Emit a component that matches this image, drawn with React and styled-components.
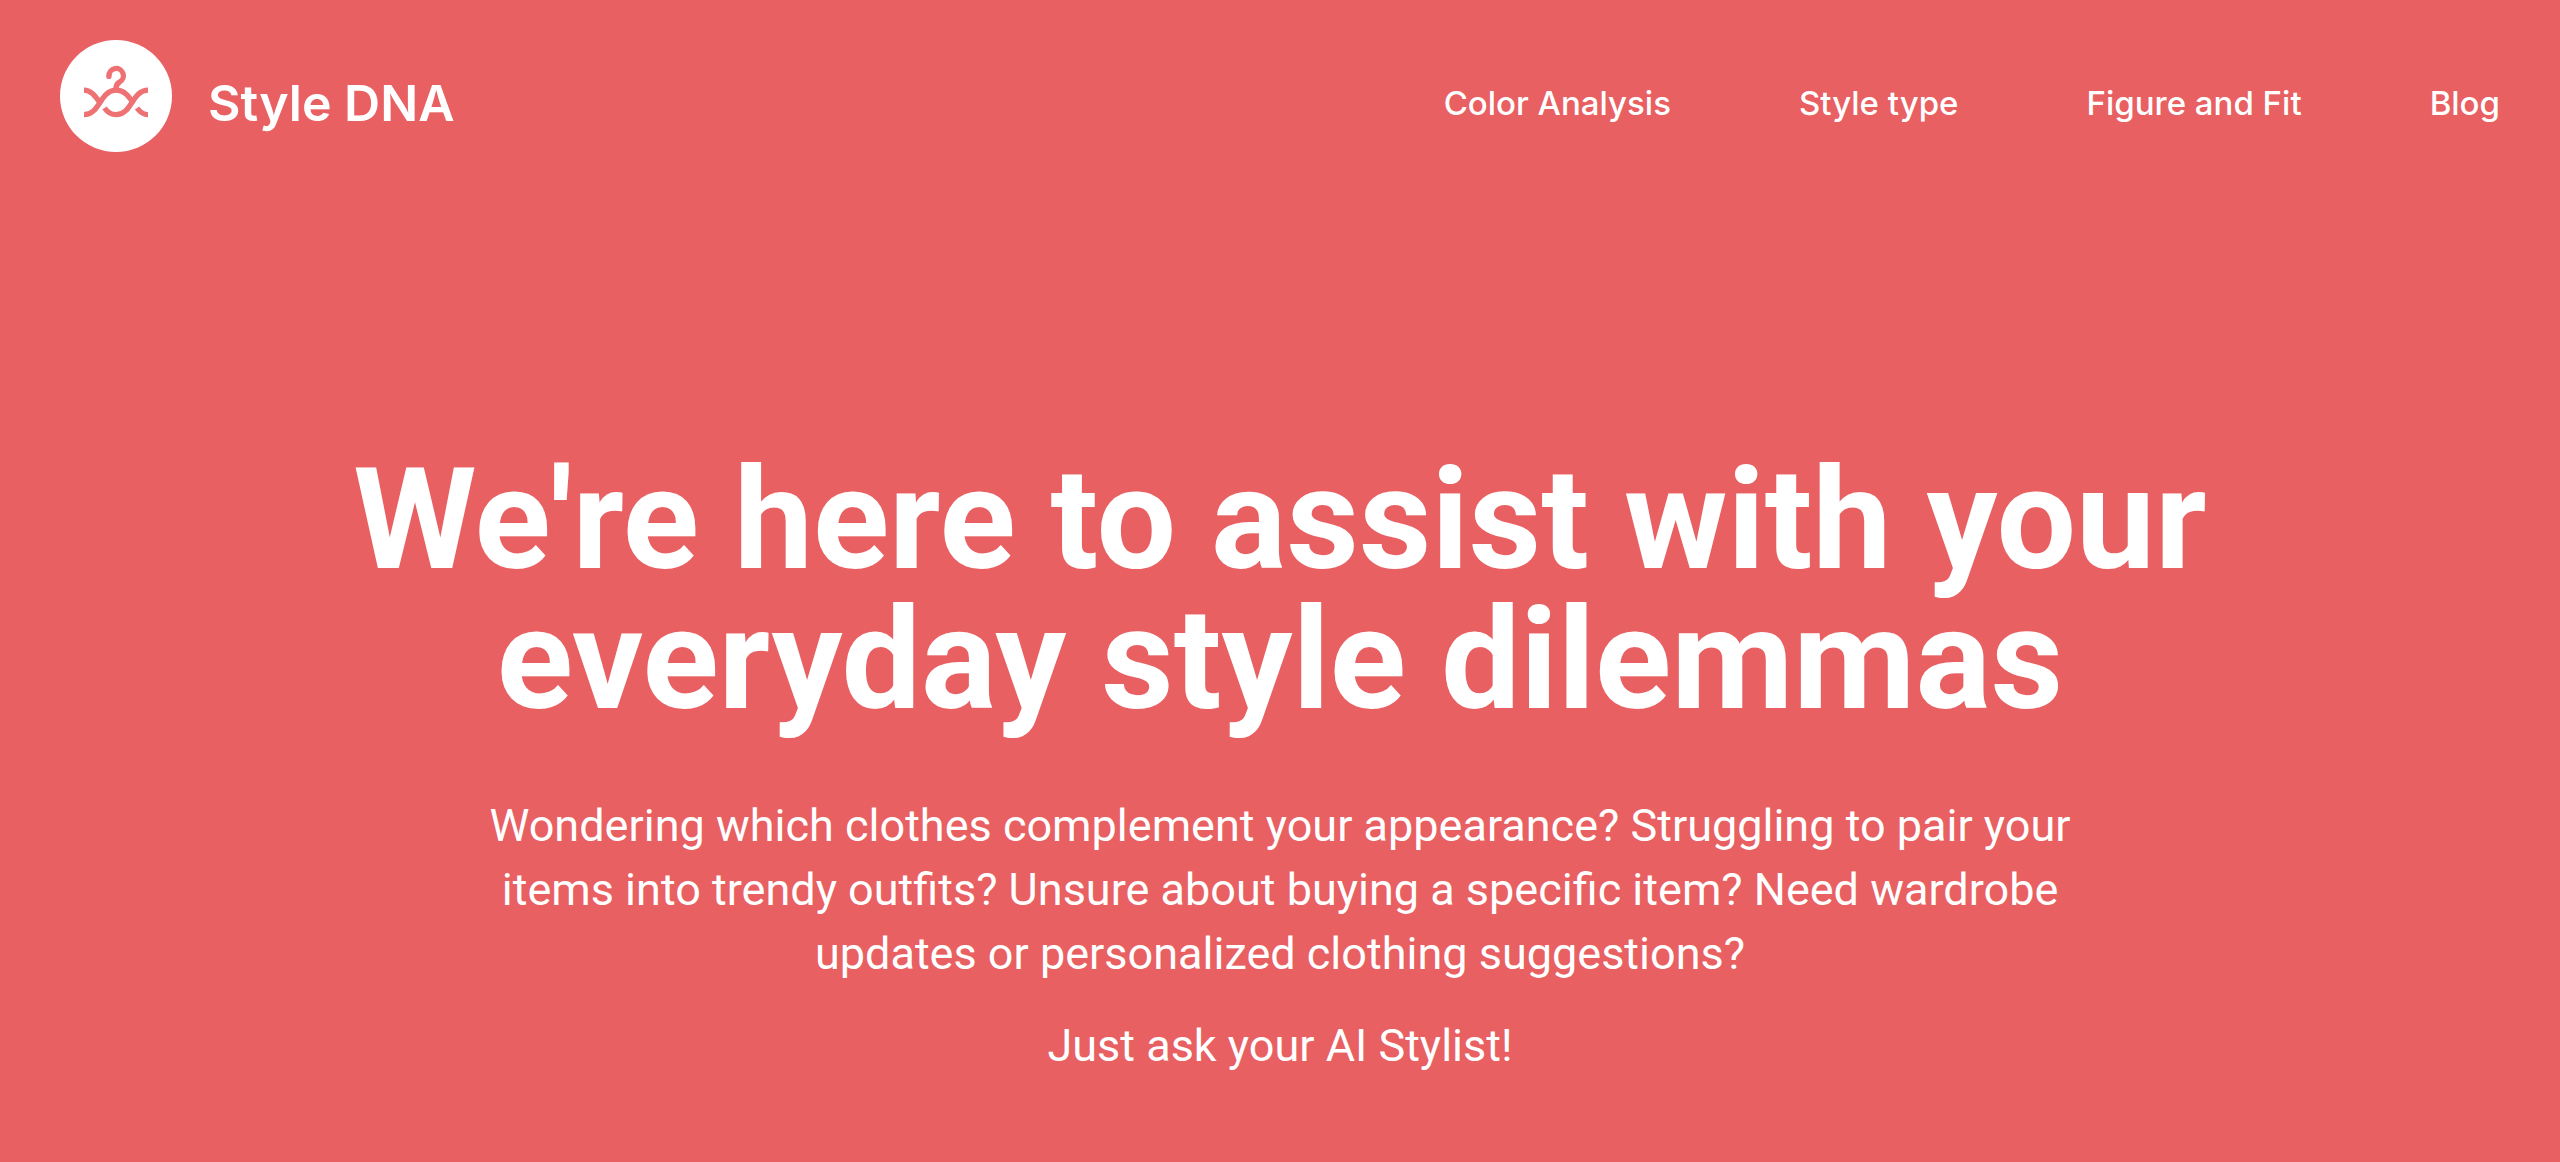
import React from "react";
import styled, { createGlobalStyle } from "styled-components";

const GlobalStyle = createGlobalStyle`
  * { box-sizing: border-box; }
  body {
    margin: 0;
    background: #e86062;
    color: #fff;
    font-family: Inter, "Liberation Sans", sans-serif;
  }
`;

const Page = styled.div`
  min-height: 100vh;
  background: #e86062;
`;

const Header = styled.header`
  display: flex;
  align-items: center;
  justify-content: space-between;
  gap: 64px;
  padding: 40px 60px 0;
`;

const Brand = styled.a`
  display: flex;
  align-items: center;
  gap: 36px;
  color: inherit;
  text-decoration: none;
`;

const LogoMark = styled.svg`
  width: 112px;
  height: 112px;
  flex: none;
`;

const BrandName = styled.span`
  padding-top: 14px;
  font-size: 50px;
  font-weight: 600;
  line-height: 64px;
  white-space: nowrap;
`;

const Nav = styled.nav`
  display: flex;
  gap: 128px;
  padding-top: 14px;
`;

const NavLink = styled.a`
  color: inherit;
  font-size: 33px;
  font-weight: 500;
  line-height: 48px;
  text-decoration: none;
  white-space: nowrap;
`;

const Hero = styled.main`
  display: flex;
  flex-direction: column;
  align-items: center;
  padding: 298px 60px 82px;
  font-family: Roboto, Inter, sans-serif;
  text-align: center;
`;

const Title = styled.h1`
  max-width: 1960px;
  margin: 0 0 64px;
  font-size: 141px;
  font-weight: 700;
  line-height: 140px;
`;

const Text = styled.p`
  max-width: 1640px;
  margin: 0 0 28px;
  font-size: 45px;
  font-weight: 400;
  line-height: 64px;

  &:last-child { margin-bottom: 0; }
`;

const links = ["Color Analysis", "Style type", "Figure and Fit", "Blog"];

function Logo() {
  return (
    <LogoMark viewBox="0 0 112 112" aria-hidden="true">
      <circle cx="56" cy="56" r="56" fill="#fff" />
      <g fill="none" stroke="#ee7173" strokeWidth="5.3">
        <path d="M24 74.7C40 74.7 40 50.2 56 50.2C65 50.2 69 57 73 62.5" />
        <path d="M24 50.2C31 50.2 35 56 39.5 62" />
        <path d="M44.5 68C47 71.5 50.5 74.7 56 74.7C72 74.7 72 50.2 88 50.2" />
        <path d="M77 68C79.8 71.8 83 74.7 88 74.7" />
        <path d="M49 36A7.2 7.2 0 1 1 59.5 42.1C57.3 43.4 56 44.6 56 48.5" />
      </g>
      <circle cx="48.9" cy="36.4" r="2.65" fill="#ee7173" />
    </LogoMark>
  );
}

export default function App() {
  return (
    <Page>
      <GlobalStyle />
      <Header>
        <Brand href="#">
          <Logo />
          <BrandName>Style DNA</BrandName>
        </Brand>
        <Nav aria-label="Main">
          {links.map((label) => (
            <NavLink key={label} href="#">{label}</NavLink>
          ))}
        </Nav>
      </Header>
      <Hero>
        <Title>We're here to assist with your everyday style dilemmas</Title>
        <Text>
          Wondering which clothes complement your appearance? Struggling to pair your items into
          trendy outfits? Unsure about buying a specific item? Need wardrobe updates or
          personalized clothing suggestions?
        </Text>
        <Text>Just ask your AI Stylist!</Text>
      </Hero>
    </Page>
  );
}
